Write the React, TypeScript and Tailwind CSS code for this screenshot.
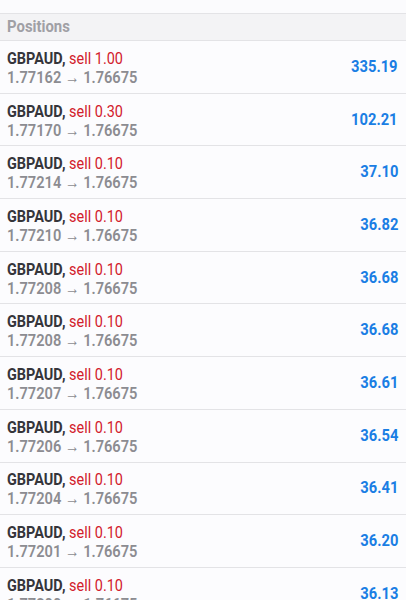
const positions = [
  { lots: "1.00", open: "1.77162", profit: "335.19" },
  { lots: "0.30", open: "1.77170", profit: "102.21" },
  { lots: "0.10", open: "1.77214", profit: "37.10" },
  { lots: "0.10", open: "1.77210", profit: "36.82" },
  { lots: "0.10", open: "1.77208", profit: "36.68" },
  { lots: "0.10", open: "1.77208", profit: "36.68" },
  { lots: "0.10", open: "1.77207", profit: "36.61" },
  { lots: "0.10", open: "1.77206", profit: "36.54" },
  { lots: "0.10", open: "1.77204", profit: "36.41" },
  { lots: "0.10", open: "1.77201", profit: "36.20" },
  { lots: "0.10", open: "1.77200", profit: "36.13" },
];

function PositionRow({ lots, open, profit }: { lots: string; open: string; profit: string }) {
  return (
    <div className="h-[52.7px] shrink-0 border-b border-[#e3e3e6] flex items-center justify-between pl-[7px] pr-[8px]">
      <div className="flex flex-col leading-[19px] text-[17px] pt-[2px] whitespace-nowrap">
        <div className="origin-left scale-x-[0.85]">
          <span className="font-bold text-[#35353a]">GBPAUD,</span>{" "}
          <span className="text-[#d2202c]">sell {lots}</span>
        </div>
        <div className="font-semibold text-[#8c8c91] origin-left scale-x-[0.86]">
          {open} → 1.76675
        </div>
      </div>
      <span className="font-bold text-[16px] text-[#1a7ee4] origin-right scale-x-[0.92]">{profit}</span>
    </div>
  );
}

export default function App() {
  return (
    <div className="w-[406px] h-[600px] overflow-hidden bg-[#fcfcfe] flex flex-col font-['Roboto',sans-serif]">
      <div className="h-[14px] shrink-0 border-b border-[#e3e3e6] bg-[#fbfbfd]" />
      <div className="h-[27px] shrink-0 bg-[#f3f3f5] border-b border-[#e3e3e6] flex items-center px-[7px]">
        <span className="text-[16px] font-bold text-[#a0a0a5] origin-left scale-x-[0.93]">Positions</span>
      </div>
      {positions.map((p, i) => (
        <PositionRow key={i} {...p} />
      ))}
    </div>
  );
}
